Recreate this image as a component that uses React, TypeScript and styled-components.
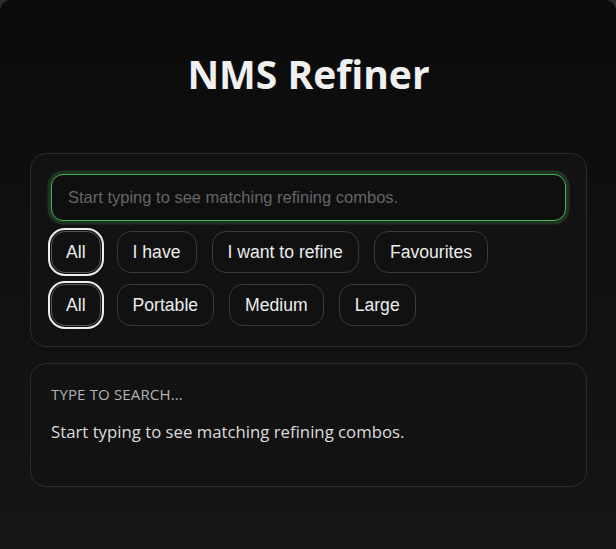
import React from "react";
import styled, { createGlobalStyle } from "styled-components";

const Global = createGlobalStyle`
  html, body { margin: 0; padding: 0; background: #2e2e2e; }
  * { box-sizing: border-box; }
`;

const Page = styled.div`
  min-height: 549px;
  border-radius: 10px 10px 0 0;
  background: linear-gradient(180deg, #0b0b0b 0%, #0e0e0e 30%, #161616 100%);
  padding: 46px 29px 40px 30px;
  font-family: "Open Sans", "Noto Sans", sans-serif;
  color: #eee;
`;

const Title = styled.h1`
  margin: 0 0 51px;
  text-align: center;
  font-size: 39px;
  font-weight: 700;
  line-height: 56px;
  color: #f0f0f0;
`;

const Card = styled.section<{ $tall?: boolean }>`
  border: 1px solid #2c2c2c;
  border-radius: 16px;
  background: #121212;
  padding: 20px;
  display: flex;
  flex-direction: column;
  gap: 11px;
  min-height: ${(p) => (p.$tall ? "124px" : "auto")};
`;

const SearchInput = styled.input`
  height: 47px;
  width: 100%;
  margin-bottom: -1px;
  border: 1.5px solid #4caf50;
  border-radius: 12px;
  background: #0f0f0f;
  box-shadow: 0 0 0 3.5px rgba(76, 175, 80, 0.22);
  padding: 0 16px;
  font-family: "Liberation Sans", Arial, sans-serif;
  font-size: 16.5px;
  color: #ddd;
  caret-color: #ddd;
  outline: none;
  &::placeholder { color: #666; }
`;

const ChipRow = styled.div`
  display: flex;
  gap: 15px;
`;

const Chip = styled.button<{ $active?: boolean }>`
  height: 42px;
  padding: 0 ${(p) => (p.$active ? "14px" : "15px")};
  border: 1px solid ${(p) => (p.$active ? "#555" : "#3a3a3a")};
  outline: ${(p) => (p.$active ? "2px solid #ededed" : "none")};
  outline-offset: 1px;
  border-radius: 14px;
  background: #111;
  color: #ececec;
  font-family: "Liberation Sans", Arial, sans-serif;
  font-size: 17.6px;
  cursor: pointer;
  margin-right: ${(p) => (p.$active ? "1px" : "0")};
`;

const Label = styled.div`
  font-size: 15px;
  color: #b3b3b3;
  letter-spacing: 0.15px;
  margin-top: 0;
`;

const Message = styled.div`
  font-size: 16.75px;
  color: #dcdcdc;
  margin-top: 5px;
`;

const Stack = styled.div`
  display: flex;
  flex-direction: column;
  gap: 16px;
`;

export default function App() {
  const modes = ["All", "I have", "I want to refine", "Favourites"];
  const sizes = ["All", "Portable", "Medium", "Large"];
  return (
    <>
      <Global />
      <Page>
        <Title>NMS Refiner</Title>
        <Stack>
          <Card>
            <SearchInput autoFocus placeholder="Start typing to see matching refining combos." />
            <ChipRow>
              {modes.map((m, i) => (
                <Chip key={m} $active={i === 0}>{m}</Chip>
              ))}
            </ChipRow>
            <ChipRow>
              {sizes.map((s, i) => (
                <Chip key={s} $active={i === 0}>{s}</Chip>
              ))}
            </ChipRow>
          </Card>
          <Card $tall>
            <Label>TYPE TO SEARCH...</Label>
            <Message>Start typing to see matching refining combos.</Message>
          </Card>
        </Stack>
      </Page>
    </>
  );
}
